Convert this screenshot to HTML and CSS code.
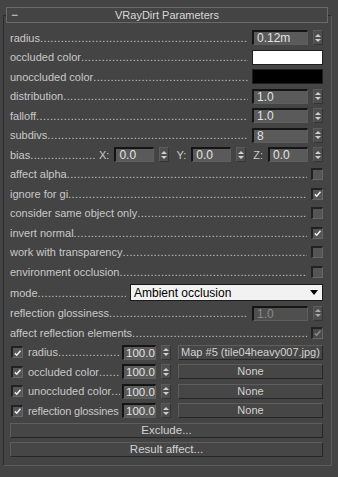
FILE: index.html
```html
<!DOCTYPE html>
<html lang="en">
<head>
    <meta charset="UTF-8">
    <title>VRayDirt Parameters</title>
    <link rel="stylesheet" href="styles.css">
</head>
<body>
    <div class="rollout">
        <div class="head">
            <span class="minus">−</span>
            <span class="title">VRayDirt Parameters</span>
        </div>
        <div class="frame">
            <div class="row"><span class="lbl">radius</span><span class="dots"></span>
                <div class="spin"><div class="field">0.12m</div><div class="arrows"><i class="up"></i><i class="dn"></i></div></div></div>
            <div class="row"><span class="lbl">occluded color</span><span class="dots"></span><div class="swatch white"></div></div>
            <div class="row"><span class="lbl">unoccluded color</span><span class="dots"></span><div class="swatch black"></div></div>
            <div class="row"><span class="lbl">distribution</span><span class="dots"></span>
                <div class="spin"><div class="field">1.0</div><div class="arrows"><i class="up"></i><i class="dn"></i></div></div></div>
            <div class="row"><span class="lbl">falloff</span><span class="dots"></span>
                <div class="spin"><div class="field">1.0</div><div class="arrows"><i class="up"></i><i class="dn"></i></div></div></div>
            <div class="row"><span class="lbl">subdivs</span><span class="dots"></span>
                <div class="spin"><div class="field">8</div><div class="arrows"><i class="up"></i><i class="dn"></i></div></div></div>
            <div class="row"><span class="lbl">bias</span><span class="dots"></span>
                <span class="axis">X:</span><div class="spin small"><div class="field">0.0</div><div class="arrows"><i class="up"></i><i class="dn"></i></div></div>
                <span class="axis">Y:</span><div class="spin small"><div class="field">0.0</div><div class="arrows"><i class="up"></i><i class="dn"></i></div></div>
                <span class="axis">Z:</span><div class="spin small"><div class="field">0.0</div><div class="arrows"><i class="up"></i><i class="dn"></i></div></div></div>
            <div class="row"><span class="lbl">affect alpha</span><span class="dots"></span><div class="check"></div></div>
            <div class="row"><span class="lbl">ignore for gi</span><span class="dots"></span>
                <div class="check"><svg viewBox="0 0 12 12"><path d="M2.5 6.5 L5 9 L10 3" /></svg></div></div>
            <div class="row"><span class="lbl">consider same object only</span><span class="dots"></span><div class="check"></div></div>
            <div class="row"><span class="lbl">invert normal</span><span class="dots"></span>
                <div class="check"><svg viewBox="0 0 12 12"><path d="M2.5 6.5 L5 9 L10 3" /></svg></div></div>
            <div class="row"><span class="lbl">work with transparency</span><span class="dots"></span><div class="check"></div></div>
            <div class="row"><span class="lbl">environment occlusion</span><span class="dots"></span><div class="check"></div></div>
            <div class="row mode-row"><span class="lbl">mode</span><span class="dots"></span>
                <div class="select"><span>Ambient occlusion</span><span class="caret"></span></div></div>
            <div class="row"><span class="lbl">reflection glossiness</span><span class="dots"></span>
                <div class="spin disabled"><div class="field">1.0</div><div class="arrows"><i class="up"></i><i class="dn"></i></div></div></div>
            <div class="row"><span class="lbl">affect reflection elements</span><span class="dots"></span>
                <div class="check dim"><svg viewBox="0 0 12 12"><path d="M2.5 6.5 L5 9 L10 3" /></svg></div></div>

            <div class="row map-row">
                <div class="check"><svg viewBox="0 0 12 12"><path d="M2.5 6.5 L5 9 L10 3" /></svg></div>
                <span class="map-lbl"><span class="lbl">radius</span><span class="dots"></span></span>
                <div class="spin tiny"><div class="field">100.0</div><div class="arrows"><i class="up"></i><i class="dn"></i></div></div>
                <div class="btn map-btn">Map #5 (tile04heavy007.jpg)</div></div>
            <div class="row map-row">
                <div class="check"><svg viewBox="0 0 12 12"><path d="M2.5 6.5 L5 9 L10 3" /></svg></div>
                <span class="map-lbl"><span class="lbl">occluded color</span><span class="dots"></span></span>
                <div class="spin tiny"><div class="field">100.0</div><div class="arrows"><i class="up"></i><i class="dn"></i></div></div>
                <div class="btn map-btn">None</div></div>
            <div class="row map-row">
                <div class="check"><svg viewBox="0 0 12 12"><path d="M2.5 6.5 L5 9 L10 3" /></svg></div>
                <span class="map-lbl"><span class="lbl">unoccluded color</span><span class="dots"></span></span>
                <div class="spin tiny"><div class="field">100.0</div><div class="arrows"><i class="up"></i><i class="dn"></i></div></div>
                <div class="btn map-btn">None</div></div>
            <div class="row map-row">
                <div class="check"><svg viewBox="0 0 12 12"><path d="M2.5 6.5 L5 9 L10 3" /></svg></div>
                <span class="map-lbl"><span class="lbl tight">reflection glossines</span></span>
                <div class="spin tiny"><div class="field">100.0</div><div class="arrows"><i class="up"></i><i class="dn"></i></div></div>
                <div class="btn map-btn">None</div></div>

            <div class="row"><div class="btn wide">Exclude...</div></div>
            <div class="row"><div class="btn wide">Result affect...</div></div>
        </div>
    </div>
</body>
</html>
```

FILE: styles.css
```css
* { box-sizing: border-box; }
body { margin: 0; background-color: #444444; font-family: "Liberation Sans", Arial, sans-serif; font-size: 11px; color: #c9c9c9; }
.rollout { width: 338px; height: 477px; padding-top: 7px; }
.head { position: relative; z-index: 1; display: flex; align-items: center; margin-left: 6px; width: 322px; height: 16px; border: 1px solid #6a6a6a; background-color: #444; }
.head .minus { width: 20px; padding-left: 4px; font-size: 12px; color: #ddd; }
.head .title { flex: 1; text-align: center; padding-right: 20px; color: #d8d8d8; }
.frame { margin: -8px 0 0 3px; width: 329px; height: 451px; border: 1px solid #2c2c2c; border-right-color: #5a5a5a; border-bottom-color: #5a5a5a; padding: 12px 8px 0 6px; }
.row { display: flex; align-items: center; height: 19.5px; white-space: nowrap; }
.lbl { flex: none; }
.dots { flex: 1; overflow: hidden; margin-right: 4px; }
.dots::after { content: "........................................................................................................................"; letter-spacing: 0.4px; }
.spin { display: flex; align-items: center; gap: 5px; }
.field { width: 56px; height: 15px; line-height: 13px; padding-left: 3px; background-color: #5a5a5a; border: 1px solid #5e5e5e; border-top: 2px solid #151515; border-left: 2px solid #151515; color: #e2e2e2; font-size: 12px; }
.arrows { display: flex; flex-direction: column; justify-content: center; align-items: center; gap: 2px; width: 10px; height: 15px; background-color: #4e4e4e; border: 1px solid #353535; border-top-color: #5c5c5c; border-left-color: #5c5c5c; }
.arrows i { display: block; width: 0; height: 0; border-left: 3px solid transparent; border-right: 3px solid transparent; }
.arrows .up { border-bottom: 3px solid #cfcfcf; }
.arrows .dn { border-top: 3px solid #cfcfcf; }
.spin.small .field { width: 40px; }
.spin.small { margin-right: 7px; }
.spin.small:last-child { margin-right: 0; }
.axis { margin-right: 5px; }
.spin.disabled .field { color: #8a8a8a; background-color: #4f4f4f; }
.spin.disabled .arrows i { border-bottom-color: #aaa; border-top-color: #aaa; }
.swatch { width: 71px; height: 15px; border: 1px solid #1e1e1e; }
.swatch.white { background-color: #fff; }
.swatch.black { background-color: #000; }
.check { flex: none; width: 12px; height: 12px; background-color: #555; border: 1px solid #666; border-top: 2px solid #222; border-left: 2px solid #222; display: flex; align-items: center; justify-content: center; }
.check svg { width: 10px; height: 10px; fill: none; stroke: #eee; stroke-width: 2; }
.check.dim { background-color: #4a4a4a; }
.check.dim svg { stroke: #8c8c8c; }
.mode-row { height: 22px; }
.select { display: flex; align-items: center; justify-content: space-between; width: 193px; height: 17px; background-color: #f2f2f2; border: 1px solid #1a1a1a; padding: 0 4px 0 3px; color: #000; font-size: 12px; }
.select .caret { width: 0; height: 0; border-left: 4px solid transparent; border-right: 4px solid transparent; border-top: 5px solid #000; }
.map-row { padding-left: 1px; }
.map-row .check { margin-right: 5px; }
.map-lbl { flex: none; display: flex; width: 92px; overflow: hidden; margin-right: 2px; }
.map-lbl .dots { margin-right: 0; }
.lbl.tight { letter-spacing: -0.15px; }
.spin.tiny .field { width: 34px; padding-left: 2px; font-size: 11.5px; }
.btn { height: 15px; line-height: 13px; text-align: center; background-color: #464646; border: 1px solid #262626; border-top-color: #5e5e5e; border-left-color: #5e5e5e; color: #d2d2d2; font-size: 11.5px; overflow: hidden; }
.map-btn { width: 148px; margin-left: 7px; font-size: 11px; }
.btn.wide { width: 313px; margin-left: 0; }
```
